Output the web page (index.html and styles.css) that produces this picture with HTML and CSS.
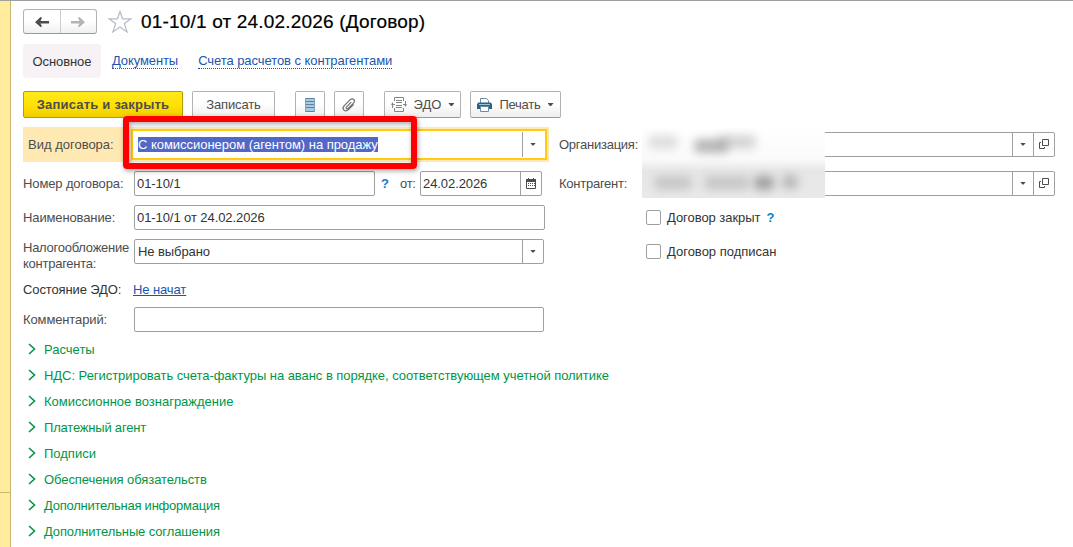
FILE: index.html
```html
<!DOCTYPE html>
<html lang="ru">
<head>
    <meta charset="UTF-8">
    <title>01-10/1 от 24.02.2026 (Договор)</title>
    <link rel="stylesheet" href="styles.css">
</head>
<body>
    <div class="window">
        <div class="sidebar"><div class="sidebar-top"></div></div>
        <div class="page">
            <div class="header">
                <div class="nav">
                    <div class="nav-btn"><svg width="14" height="10" viewBox="0 0 14 10"><path d="M14 4v2.500H5.500L7 9.500 5.500 10 0 5.200 5.500 0 7 .8 5.500 4z" fill="#4d4d4d"/></svg></div>
                    <div class="nav-btn"><svg width="14" height="10" viewBox="0 0 14 10"><path d="M0 4v2.500h8.500L7 9.500l1.500.5L14 5.200 8.500 0 7 .8 8.500 4z" fill="#b3b3b3"/></svg></div>
                </div>
                <svg class="star" width="24" height="23" viewBox="0 0 24 23"><path d="M12 1.500l2.600 7.300h8.200l-6.500 4.900 2.800 8.200-7.100-5-7.100 5 2.800-8.200L1.200 8.800h8.200z" fill="#fff" stroke="#b5bcc6" stroke-width="1.200"/></svg>
                <h1>01-10/1 от 24.02.2026 (Договор)</h1>
            </div>

            <div class="tabs">
                <div class="tab active">Основное</div>
                <a class="tab-link docs">Документы</a>
                <a class="tab-link accounts">Счета расчетов с контрагентами</a>
            </div>

            <div class="toolbar">
                <div class="btn primary">Записать и закрыть</div>
                <div class="btn save">Записать</div>
                <div class="btn icon list"><svg width="10" height="14" viewBox="0 0 10 14"><path fill="#a9cbe2" d="M0 0h10v14H0z"/><path d="M0 .5h10M0 3.500h10M0 6.500h10M0 9.500h10M0 13.500h10" stroke="#5a83a5"/><path d="M.5 0v14M9.500 0v14" stroke="#7fa5c2"/></svg></div>
                <div class="btn icon clip"><svg width="14" height="14" viewBox="0 0 14 14"><path d="M9.200 4.200L4.600 8.800c-1.200 1.200.5 2.700 1.600 1.600l5.300-5.300c2.600-2.600-.8-5.900-3.300-3.400L2.300 7.600c-3.200 3.200.9 7.300 4.100 4.100l5.300-5.300" fill="none" stroke="#707070" stroke-width="1.200"/></svg></div>
                <div class="btn edo">
                    <svg width="16" height="15" viewBox="0 0 16 15"><path d="M3.500 4V.5h9V4M3.500 11v3.500h9V11M5 3.500h6M5 5.500h6M5 8.500h6M5 10.500h6" fill="none" stroke="#858585"/><path d="M1.500 11V7.500H4M14.500 4v3.500H12" fill="none" stroke="#858585"/><path d="M0 8l1.500-3L3 8zM13 7l1.500 3L16 7z" fill="#858585"/></svg>
                    <span>ЭДО</span><i class="arrow"></i>
                </div>
                <div class="btn print">
                    <svg width="15" height="14" viewBox="0 0 15 14"><path d="M3.500 5V.5h6l2 2V5" fill="#fff" stroke="#6b8ca5"/><path fill="#315f83" d="M1.500 4.500h12L15 6v5H0V6z"/><path fill="#9dc3dc" d="M2 6h11v1H2z"/><path d="M3.500 8.500h8v5h-8z" fill="#fff" stroke="#6b8ca5"/></svg>
                    <span>Печать</span><i class="arrow"></i>
                </div>
            </div>

            <div class="form">
                <div class="left">
                    <div class="row kind">
                        <label>Вид договора:</label>
                        <div class="field focused"><span class="value"><mark>С комиссионером (агентом) на продажу</mark></span><span class="drop"><i class="arrow"></i></span></div>
                        <div class="callout"></div>
                    </div>
                    <div class="row number">
                        <label>Номер договора:</label>
                        <div class="field num"><span class="value">01-10/1</span></div>
                        <span class="help">?</span>
                        <span class="from">от:</span>
                        <div class="field date"><span class="value">24.02.2026</span><span class="drop"><svg width="10" height="11" viewBox="0 0 10 11"><path d="M.5 2.500h9v8h-9z" fill="#fff" stroke="#4d4d4d"/><path fill="#4d4d4d" d="M0 1h10v3H0zM2 0h1v2H2zM7 0h1v2H7zM2 5h1v1H2zM4 5h1v1H4zM6 5h1v1H6zM2 7h1v1H2zM4 7h1v1H4zM6 7h1v1H6zM8 5h1v1H8zM8 7h1v1H8z"/></svg></span></div>
                    </div>
                    <div class="row name">
                        <label>Наименование:</label>
                        <div class="field full"><span class="value">01-10/1 от 24.02.2026</span></div>
                    </div>
                    <div class="row tax">
                        <label>Налогообложение контрагента:</label>
                        <div class="field wide"><span class="value">Не выбрано</span><span class="drop"><i class="arrow"></i></span></div>
                    </div>
                    <div class="row state">
                        <label>Состояние ЭДО:</label>
                        <a class="state-link">Не начат</a>
                    </div>
                    <div class="row comment">
                        <label>Комментарий:</label>
                        <div class="field wide"></div>
                    </div>
                </div>

                <div class="right">
                    <div class="row org">
                        <label>Организация:</label>
                        <div class="field ref"><span class="value"></span><span class="drop"><i class="arrow"></i></span><span class="drop"><svg width="10" height="10" viewBox="0 0 10 10"><path d="M3.500.5h6v6h-6zM2 3.500H.5v6h5V8" fill="none" stroke="#4d4d4d"/></svg></span></div>
                    </div>
                    <div class="row partner">
                        <label>Контрагент:</label>
                        <div class="field ref"><span class="value"></span><span class="drop"><i class="arrow"></i></span><span class="drop"><svg width="10" height="10" viewBox="0 0 10 10"><path d="M3.500.5h6v6h-6zM2 3.500H.5v6h5V8" fill="none" stroke="#4d4d4d"/></svg></span></div>
                    </div>
                    <div class="row check"><span class="box"></span><span class="closed">Договор закрыт</span><span class="help">?</span></div>
                    <div class="row check"><span class="box"></span><span class="signed">Договор подписан</span></div>
                    <div class="masked">
                        <i class="smudge s1"></i><i class="smudge s2"></i><i class="smudge s3"></i>
                        <i class="smudge s4"></i><i class="smudge s5"></i><i class="smudge s6"></i><i class="smudge s7"></i>
                    </div>
                </div>
            </div>

            <div class="groups">
                <div class="group"><svg width="8" height="12" viewBox="0 0 8 12"><path d="M1 1l5.500 5L1 11" fill="none" stroke="#009646" stroke-width="1.600"/></svg><span>Расчеты</span></div>
                <div class="group"><svg width="8" height="12" viewBox="0 0 8 12"><path d="M1 1l5.500 5L1 11" fill="none" stroke="#009646" stroke-width="1.600"/></svg><span class="vat">НДС: Регистрировать счета-фактуры на аванс в порядке, соответствующем учетной политике</span></div>
                <div class="group"><svg width="8" height="12" viewBox="0 0 8 12"><path d="M1 1l5.500 5L1 11" fill="none" stroke="#009646" stroke-width="1.600"/></svg><span>Комиссионное вознаграждение</span></div>
                <div class="group"><svg width="8" height="12" viewBox="0 0 8 12"><path d="M1 1l5.500 5L1 11" fill="none" stroke="#009646" stroke-width="1.600"/></svg><span class="agent">Платежный агент</span></div>
                <div class="group"><svg width="8" height="12" viewBox="0 0 8 12"><path d="M1 1l5.500 5L1 11" fill="none" stroke="#009646" stroke-width="1.600"/></svg><span>Подписи</span></div>
                <div class="group"><svg width="8" height="12" viewBox="0 0 8 12"><path d="M1 1l5.500 5L1 11" fill="none" stroke="#009646" stroke-width="1.600"/></svg><span class="security">Обеспечения обязательств</span></div>
                <div class="group"><svg width="8" height="12" viewBox="0 0 8 12"><path d="M1 1l5.500 5L1 11" fill="none" stroke="#009646" stroke-width="1.600"/></svg><span class="extra">Дополнительная информация</span></div>
                <div class="group"><svg width="8" height="12" viewBox="0 0 8 12"><path d="M1 1l5.500 5L1 11" fill="none" stroke="#009646" stroke-width="1.600"/></svg><span class="deals">Дополнительные соглашения</span></div>
            </div>
        </div>
    </div>
</body>
</html>
```
FILE: styles.css
```css
* {
    box-sizing: border-box;
}
body {
    margin: 0;
    font-family: "Liberation Sans", Arial, sans-serif;
    font-size: 13px;
    color: #333;
    background: #fff;
    overflow: hidden;
}
.window {
    display: flex;
    height: 547px;
    border-top: 1px solid #a0a0a0;
}
.sidebar {
    width: 11px;
    background: #ffec9c;
    border-right: 1px solid #c9b76c;
}
.sidebar-top {
    height: 492px;
    border-bottom: 1px solid #c9b76c;
}
.page {
    flex: 1;
    padding: 8px 0 0 12px;
}
svg {
    display: block;
    flex: none;
}
.header {
    display: flex;
    align-items: center;
    height: 25px;
}
.nav {
    display: flex;
    width: 74px;
    height: 25px;
    border: 1px solid #b3b3b3;
    border-bottom-color: #999;
    border-radius: 3px;
    background: linear-gradient(#fff 50%, #f0f0f0);
}
.nav-btn {
    display: flex;
    flex: 1;
    align-items: center;
    justify-content: center;
}
.nav-btn + .nav-btn {
    border-left: 1px solid #ccc;
}
.star {
    margin: 0 9px 0 11px;
}
h1 {
    margin: 0;
    font-size: 19px;
    font-weight: normal;
    letter-spacing: 0.18px;
    color: #000;
    -webkit-text-stroke: 0.2px #000;
}
.tabs {
    display: flex;
    align-items: center;
    height: 34px;
    margin-top: 10px;
}
.tab {
    width: 78px;
    height: 34px;
    line-height: 35px;
    text-align: center;
    letter-spacing: -0.1px;
    background: #f6f2f6;
    border-radius: 4px;
}
.tab-link {
    color: #1a56b0;
    line-height: 14px;
    border-bottom: 1px dotted #1a56b0;
}
.docs {
    margin-left: 11px;
    letter-spacing: -0.1px;
}
.accounts {
    margin-left: 20px;
    letter-spacing: -0.07px;
}
.toolbar {
    display: flex;
    height: 27px;
    margin-top: 13px;
}
.btn {
    display: flex;
    align-items: center;
    justify-content: center;
    height: 27px;
    border: 1px solid #b3b3b3;
    border-bottom-color: #999;
    border-radius: 2px;
    background: linear-gradient(#fff 45%, #eee);
    color: #4d4d4d;
}
.primary {
    width: 160px;
    font-weight: bold;
    letter-spacing: 0.2px;
    background: linear-gradient(#ffea1a, #ffdf00 60%, #f0cd00);
    border-color: #b39b00;
}
.save {
    width: 83px;
    margin-left: 9px;
    letter-spacing: -0.15px;
}
.icon {
    width: 30px;
}
.list {
    margin-left: 20px;
}
.clip {
    margin-left: 9px;
}
.edo {
    width: 77px;
    margin-left: 20px;
}
.print {
    width: 91px;
    margin-left: 9px;
    letter-spacing: -0.25px;
}
.btn span {
    margin: 0 7px;
}
.arrow {
    flex: none;
    width: 6px;
    height: 3px;
    background: #4d4d4d;
    clip-path: polygon(0 0, 100% 0, 60% 100%, 40% 100%);
}
.form {
    display: flex;
    margin-top: 9px;
    height: 206px;
}
.left {
    width: 536px;
}
.right {
    position: relative;
    width: 496px;
    padding-top: 5px;
}
.row {
    display: flex;
    align-items: center;
    height: 25px;
    margin-bottom: 9px;
}
label {
    flex: none;
    width: 111px;
    color: #4d4d4d;
    letter-spacing: -0.12px;
}
.field {
    display: flex;
    flex: none;
    height: 25px;
    background: #fff;
    border: 1px solid #a0a0a0;
    border-radius: 2px;
}
.value {
    flex: 1;
    padding-left: 3px;
    line-height: 24px;
    letter-spacing: -0.08px;
    white-space: nowrap;
}
.number .value,
.name .value {
    padding-left: 2px;
}
.drop {
    display: flex;
    align-items: center;
    justify-content: center;
    width: 21px;
    padding-bottom: 1px;
    border-left: 1px solid #a0a0a0;
}
.kind {
    position: relative;
    height: 35px;
}
.kind label {
    width: 108px;
    height: 35px;
    padding-left: 5px;
    line-height: 35px;
    letter-spacing: 0;
    background: #ffe9b3;
}
.focused {
    width: 416px;
    height: 31px;
    padding: 1px 2px;
    border: 2px solid #ffcc12;
    border-radius: 0;
    box-shadow: 0 0 0 2px #ffe9b3;
}
.focused .value {
    line-height: 25px;
    letter-spacing: -0.03px;
}
mark {
    background: #5068c8;
    color: #fff;
}
.callout {
    position: absolute;
    left: 100px;
    top: -11px;
    width: 294px;
    height: 53px;
    border: 6px solid #f00;
    border-radius: 4px;
    box-shadow: 1px 2px 5px rgba(0,0,0,0.35), inset 1px 2px 5px rgba(0,0,0,0.35);
}
.num {
    width: 241px;
}
.help {
    color: #0a7fd0;
    font-weight: bold;
}
.number .help {
    width: 19px;
    margin-left: 6px;
}
.from {
    width: 20px;
    color: #4d4d4d;
    letter-spacing: -0.3px;
}
.date {
    width: 122px;
}
.full {
    width: 411px;
}
.wide {
    width: 410px;
}
.tax label {
    line-height: 16px;
    padding-top: 8px;
    letter-spacing: -0.25px;
}
.state {
    height: 17px;
    margin: 17px 0 9px;
}
.state label {
    width: 110px;
    color: #333;
}
.state-link {
    color: #1a56b0;
    letter-spacing: -0.1px;
    text-decoration: underline;
}
.row.org {
    margin-bottom: 14px;
}
.org label,
.partner label {
    width: 87px;
    letter-spacing: -0.25px;
}
.ref {
    width: 409px;
}
.check {
    padding-left: 87px;
}
.box {
    width: 15px;
    height: 15px;
    margin-right: 6px;
    border: 1px solid #a0a0a0;
    border-radius: 2px;
}
.closed {
    letter-spacing: -0.05px;
}
.check .help {
    margin-left: 6px;
}
.masked {
    position: absolute;
    left: 83px;
    top: 0;
    width: 183px;
    height: 71px;
    overflow: hidden;
    background: linear-gradient(#fff, #fafafa 45%, #e6e6e6 62%, #e9e9e9);
}
.smudge {
    position: absolute;
    height: 14px;
    background: #999;
    border-radius: 5px;
    filter: blur(5px);
}
.s1 {
    left: 6px;
    top: 8px;
    width: 30px;
    opacity: 0.3;
}
.s2 {
    left: 52px;
    top: 12px;
    width: 34px;
    opacity: 0.7;
}
.s3 {
    left: 76px;
    top: 8px;
    width: 38px;
    opacity: 0.4;
}
.s4 {
    left: 12px;
    top: 49px;
    width: 38px;
    opacity: 0.4;
}
.s5 {
    left: 62px;
    top: 49px;
    width: 46px;
    opacity: 0.4;
}
.s6 {
    left: 112px;
    top: 49px;
    width: 20px;
    opacity: 0.9;
}
.s7 {
    left: 140px;
    top: 48px;
    width: 16px;
    opacity: 0.6;
}
.groups {
    padding-top: 3px;
}
.group {
    display: flex;
    align-items: center;
    height: 26px;
    padding-left: 5px;
    color: #009646;
}
.group span {
    margin-left: 8px;
    white-space: nowrap;
}
.vat {
    letter-spacing: -0.045px;
}
.agent {
    letter-spacing: -0.2px;
}
.security {
    letter-spacing: -0.08px;
}
.extra {
    letter-spacing: -0.24px;
}
.deals {
    letter-spacing: -0.12px;
}
```
